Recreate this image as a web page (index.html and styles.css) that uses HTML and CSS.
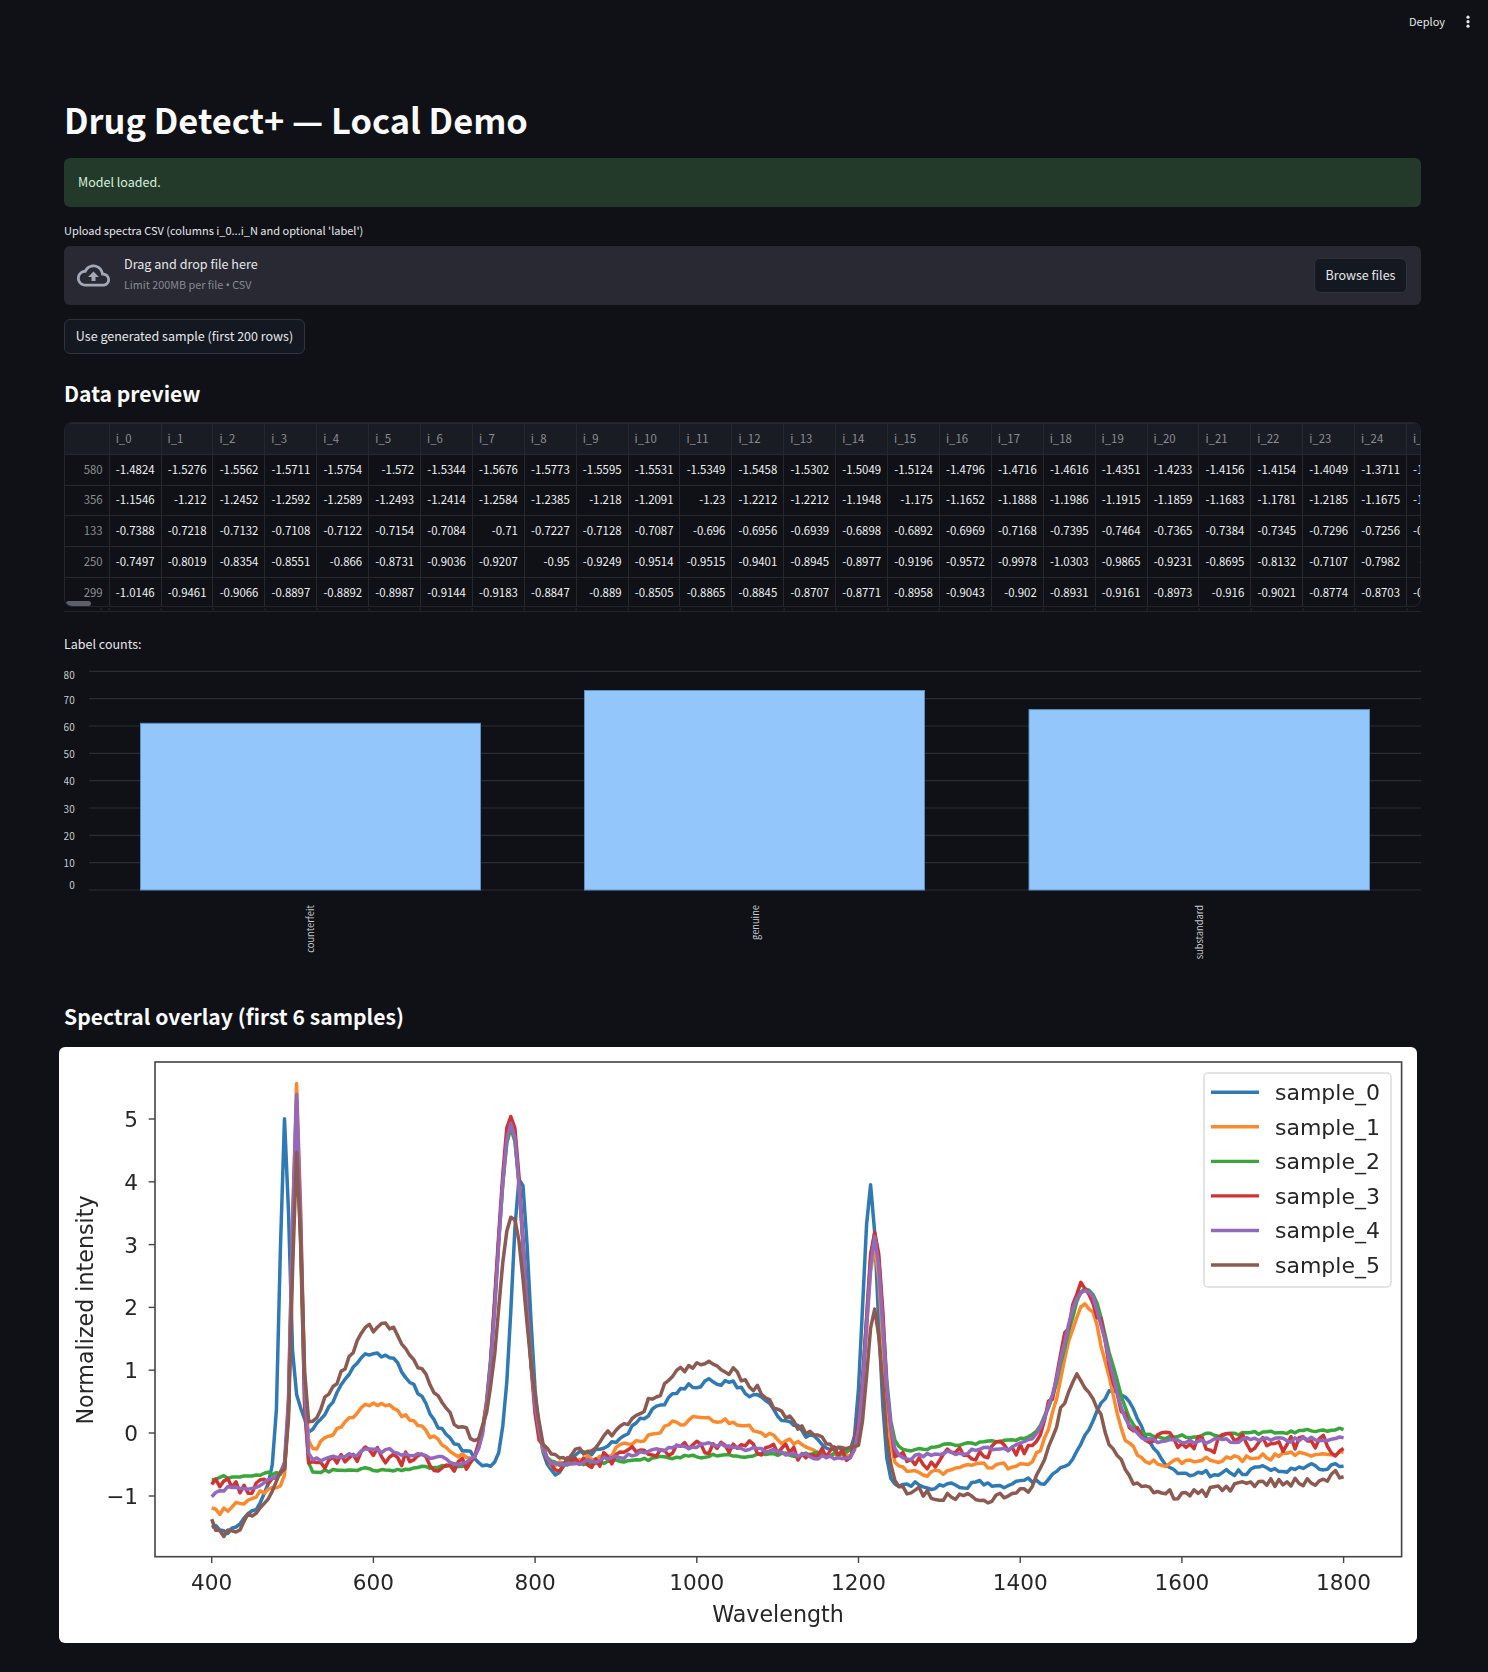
FILE: index.html
```html
<!DOCTYPE html>
<html lang="en">

<head>
    <meta charset="UTF-8">
    <title>Drug Detect+</title>
    <link rel="stylesheet" href="styles.css">
</head>

<body>
    <div class="toolbar">
        <span class="deploy">Deploy</span>
        <svg class="menu-dots" width="6" height="16" viewBox="0 0 6 16">
            <circle cx="3" cy="3.2" r="1.6"></circle>
            <circle cx="3" cy="7.7" r="1.6"></circle>
            <circle cx="3" cy="12.2" r="1.6"></circle>
        </svg>
    </div>

    <main class="main">
        <h1 class="page-title">Drug Detect+ — Local Demo</h1>

        <div class="alert-success">Model loaded.</div>

        <div class="upload-label">Upload spectra CSV (columns i_0...i_N and optional 'label')</div>
        <div class="uploader">
            <svg class="upload-icon" width="33" height="33" viewBox="0 0 24 24">
                <path d="M19.35 10.04C18.67 6.59 15.64 4 12 4 9.11 4 6.6 5.64 5.35 8.04 2.34 8.36 0 10.91 0 14c0 3.31 2.69 6 6 6h13c2.76 0 5-2.24 5-5 0-2.64-2.05-4.78-4.65-4.96zM19 18H6c-2.21 0-4-1.79-4-4 0-2.05 1.53-3.76 3.56-3.97l1.07-.11.5-.95C8.08 7.14 9.94 6 12 6c2.62 0 4.88 1.86 5.39 4.43l.3 1.5 1.53.11c1.56.1 2.78 1.41 2.78 2.96 0 1.65-1.35 3-3 3zM8 13h2.55v3h2.9v-3H16l-4-4z"></path>
            </svg>
            <div class="upload-text">
                <div class="upload-title">Drag and drop file here</div>
                <div class="upload-limit">Limit 200MB per file <span class="limit-dot">•</span> CSV</div>
            </div>
            <button class="btn btn-browse">Browse files</button>
        </div>

        <button class="btn btn-sample">Use generated sample (first 200 rows)</button>

        <h2 class="section-title preview-title">Data preview</h2>

        <div class="table-wrap">
            <table class="data-table">
                <thead>
                    <tr><th></th><th>i_0</th><th>i_1</th><th>i_2</th><th>i_3</th><th>i_4</th><th>i_5</th><th>i_6</th><th>i_7</th><th>i_8</th><th>i_9</th><th>i_10</th><th>i_11</th><th>i_12</th><th>i_13</th><th>i_14</th><th>i_15</th><th>i_16</th><th>i_17</th><th>i_18</th><th>i_19</th><th>i_20</th><th>i_21</th><th>i_22</th><th>i_23</th><th>i_24</th><th>i_25</th></tr>
                </thead>
                <tbody>
                    <tr><th>580</th><td>-1.4824</td><td>-1.5276</td><td>-1.5562</td><td>-1.5711</td><td>-1.5754</td><td>-1.572</td><td>-1.5344</td><td>-1.5676</td><td>-1.5773</td><td>-1.5595</td><td>-1.5531</td><td>-1.5349</td><td>-1.5458</td><td>-1.5302</td><td>-1.5049</td><td>-1.5124</td><td>-1.4796</td><td>-1.4716</td><td>-1.4616</td><td>-1.4351</td><td>-1.4233</td><td>-1.4156</td><td>-1.4154</td><td>-1.4049</td><td>-1.3711</td><td>-1.3566</td></tr>
                    <tr><th>356</th><td>-1.1546</td><td>-1.212</td><td>-1.2452</td><td>-1.2592</td><td>-1.2589</td><td>-1.2493</td><td>-1.2414</td><td>-1.2584</td><td>-1.2385</td><td>-1.218</td><td>-1.2091</td><td>-1.23</td><td>-1.2212</td><td>-1.2212</td><td>-1.1948</td><td>-1.175</td><td>-1.1652</td><td>-1.1888</td><td>-1.1986</td><td>-1.1915</td><td>-1.1859</td><td>-1.1683</td><td>-1.1781</td><td>-1.2185</td><td>-1.1675</td><td>-1.1542</td></tr>
                    <tr><th>133</th><td>-0.7388</td><td>-0.7218</td><td>-0.7132</td><td>-0.7108</td><td>-0.7122</td><td>-0.7154</td><td>-0.7084</td><td>-0.71</td><td>-0.7227</td><td>-0.7128</td><td>-0.7087</td><td>-0.696</td><td>-0.6956</td><td>-0.6939</td><td>-0.6898</td><td>-0.6892</td><td>-0.6969</td><td>-0.7168</td><td>-0.7395</td><td>-0.7464</td><td>-0.7365</td><td>-0.7384</td><td>-0.7345</td><td>-0.7296</td><td>-0.7256</td><td>-0.7198</td></tr>
                    <tr><th>250</th><td>-0.7497</td><td>-0.8019</td><td>-0.8354</td><td>-0.8551</td><td>-0.866</td><td>-0.8731</td><td>-0.9036</td><td>-0.9207</td><td>-0.95</td><td>-0.9249</td><td>-0.9514</td><td>-0.9515</td><td>-0.9401</td><td>-0.8945</td><td>-0.8977</td><td>-0.9196</td><td>-0.9572</td><td>-0.9978</td><td>-1.0303</td><td>-0.9865</td><td>-0.9231</td><td>-0.8695</td><td>-0.8132</td><td>-0.7107</td><td>-0.7982</td><td>-0.849</td></tr>
                    <tr><th>299</th><td>-1.0146</td><td>-0.9461</td><td>-0.9066</td><td>-0.8897</td><td>-0.8892</td><td>-0.8987</td><td>-0.9144</td><td>-0.9183</td><td>-0.8847</td><td>-0.889</td><td>-0.8505</td><td>-0.8865</td><td>-0.8845</td><td>-0.8707</td><td>-0.8771</td><td>-0.8958</td><td>-0.9043</td><td>-0.902</td><td>-0.8931</td><td>-0.9161</td><td>-0.8973</td><td>-0.916</td><td>-0.9021</td><td>-0.8774</td><td>-0.8703</td><td>-0.8612</td></tr>
                </tbody>
            </table>
            <div class="table-scrollbar"></div>
        </div>
        <div class="table-tail"></div>

        <div class="counts-label">Label counts:</div>

        <!-- 柱状图：x、y 相对图表左上角 (64, 660) -->
        <svg class="bar-chart" width="1357" height="310" viewBox="0 0 1357 310">
            <g class="grid-lines">
                <line x1="25" x2="1357" y1="11.3" y2="11.3"></line>
                <line x1="25" x2="1357" y1="38.7" y2="38.7"></line>
                <line x1="25" x2="1357" y1="66" y2="66"></line>
                <line x1="25" x2="1357" y1="93.3" y2="93.3"></line>
                <line x1="25" x2="1357" y1="120.7" y2="120.7"></line>
                <line x1="25" x2="1357" y1="148" y2="148"></line>
                <line x1="25" x2="1357" y1="175.3" y2="175.3"></line>
                <line x1="25" x2="1357" y1="202.7" y2="202.7"></line>
                <line x1="25" x2="1357" y1="230" y2="230"></line>
            </g>
            <g class="bars">
                <rect x="76.5" y="63.3" width="340" height="166.7"></rect>
                <rect x="520.5" y="30.5" width="340" height="199.5"></rect>
                <rect x="965" y="49.6" width="340.5" height="180.4"></rect>
            </g>
            <g class="y-labels">
                <text x="10.7" y="19">80</text>
                <text x="10.7" y="43.5">70</text>
                <text x="10.7" y="70.5">60</text>
                <text x="10.7" y="98">50</text>
                <text x="10.7" y="125">40</text>
                <text x="10.7" y="152.5">30</text>
                <text x="10.7" y="179.5">20</text>
                <text x="10.7" y="206.5">10</text>
                <text x="10.7" y="229">0</text>
            </g>
            <g class="x-labels">
                <text transform="translate(250 245) rotate(-90)">counterfeit</text>
                <text transform="translate(694.5 245) rotate(-90)">genuine</text>
                <text transform="translate(1138.5 245) rotate(-90)">substandard</text>
            </g>
        </svg>

        <h2 class="section-title overlay-title">Spectral overlay (first 6 samples)</h2>

        <div class="plot-card">
            <svg class="spectra-plot" width="1358" height="596" viewBox="0 0 1358 596">
                <g id="spectra"></g>
                <rect class="plot-frame" x="96" y="15" width="1246.6" height="494.7"></rect>
                <g class="plot-ticks">
                    <line x1="152.7" x2="152.7" y1="509.7" y2="516"></line>
                    <line x1="314.4" x2="314.4" y1="509.7" y2="516"></line>
                    <line x1="476.1" x2="476.1" y1="509.7" y2="516"></line>
                    <line x1="637.8" x2="637.8" y1="509.7" y2="516"></line>
                    <line x1="799.5" x2="799.5" y1="509.7" y2="516"></line>
                    <line x1="961.2" x2="961.2" y1="509.7" y2="516"></line>
                    <line x1="1122.9" x2="1122.9" y1="509.7" y2="516"></line>
                    <line x1="1284.6" x2="1284.6" y1="509.7" y2="516"></line>
                    <line x1="89.7" x2="96" y1="449" y2="449"></line>
                    <line x1="89.7" x2="96" y1="386" y2="386"></line>
                    <line x1="89.7" x2="96" y1="323.2" y2="323.2"></line>
                    <line x1="89.7" x2="96" y1="260.4" y2="260.4"></line>
                    <line x1="89.7" x2="96" y1="197.6" y2="197.6"></line>
                    <line x1="89.7" x2="96" y1="134.8" y2="134.8"></line>
                    <line x1="89.7" x2="96" y1="72" y2="72"></line>
                </g>
                <g class="plot-text x-ticks">
                    <text x="152.7" y="543">400</text>
                    <text x="314.4" y="543">600</text>
                    <text x="476.1" y="543">800</text>
                    <text x="637.8" y="543">1000</text>
                    <text x="799.5" y="543">1200</text>
                    <text x="961.2" y="543">1400</text>
                    <text x="1122.9" y="543">1600</text>
                    <text x="1284.6" y="543">1800</text>
                    <text class="axis-title" x="719" y="575">Wavelength</text>
                </g>
                <g class="plot-text y-ticks">
                    <text x="79" y="457">−1</text>
                    <text x="79" y="394">0</text>
                    <text x="79" y="331">1</text>
                    <text x="79" y="268">2</text>
                    <text x="79" y="205.6">3</text>
                    <text x="79" y="142.8">4</text>
                    <text x="79" y="80">5</text>
                </g>
                <text class="plot-text axis-title y-title" transform="translate(33.5 263) rotate(-90)">Normalized intensity</text>
                <rect class="legend-box" x="1145" y="26" width="187" height="214" rx="4"></rect>
                <g class="legend-lines">
                    <line class="s0" x1="1152" x2="1200" y1="45.3" y2="45.3"></line>
                    <line class="s1" x1="1152" x2="1200" y1="79.8" y2="79.8"></line>
                    <line class="s2" x1="1152" x2="1200" y1="114.4" y2="114.4"></line>
                    <line class="s3" x1="1152" x2="1200" y1="148.9" y2="148.9"></line>
                    <line class="s4" x1="1152" x2="1200" y1="183.5" y2="183.5"></line>
                    <line class="s5" x1="1152" x2="1200" y1="218" y2="218"></line>
                </g>
                <g class="plot-text legend-text">
                    <text x="1216" y="53">sample_0</text>
                    <text x="1216" y="87.5">sample_1</text>
                    <text x="1216" y="122">sample_2</text>
                    <text x="1216" y="156.5">sample_3</text>
                    <text x="1216" y="191">sample_4</text>
                    <text x="1216" y="225.5">sample_5</text>
                </g>
            </svg>
        </div>
    </main>

    <script src="spectra.js"></script>
</body>

</html>
```

FILE: styles.css
```css
/* 页面基础样式 */
* {
    box-sizing: border-box;
}

body {
    margin: 0;
    background: #0f1116;
    color: #fafafa;
    font-family: "Noto Sans CJK SC", "Noto Sans", sans-serif;
    font-size: 13px;
}

/* 顶部工具栏 */
.toolbar {
    height: 44px;
    display: flex;
    justify-content: flex-end;
    align-items: center;
    gap: 20px;
    padding-right: 17px;
}

.deploy {
    padding-bottom: 2px;
    font-size: 11px;
    color: #e6e7ea;
}

.menu-dots {
    fill: #e6e7ea;
}

/* 主内容区 */
.main {
    padding: 0 67px 29px 64px;
}

.page-title {
    margin: 50px 0 14px;
    font-size: 34.4px;
    line-height: 50px;
    font-weight: 700;
    color: #fafafa;
}

.alert-success {
    height: 49px;
    display: flex;
    align-items: center;
    padding: 0 14px 3px;
    border-radius: 6px;
    background: #233a2a;
    color: #d6f0dc;
    font-size: 12.5px;
}

.upload-label {
    margin-top: 15px;
    line-height: 16px;
    font-size: 11px;
    color: #e6e7ea;
}

/* 上传框 */
.uploader {
    height: 59px;
    margin-top: 8px;
    display: flex;
    align-items: center;
    padding: 0 14px 0 13px;
    border-radius: 6px;
    background: #282932;
}

.upload-icon {
    fill: #a3a8b8;
    flex: none;
}

.upload-text {
    flex: 1;
    margin-left: 14px;
    padding-bottom: 2px;
}

.upload-title {
    line-height: 20px;
    font-size: 12.6px;
    color: #e6e7ea;
}

.upload-limit {
    line-height: 20px;
    font-size: 10.8px;
    color: #868a93;
}

/* CJK 字体的圆点太宽，这里换一个窄的 */
.limit-dot {
    font-family: "Noto Sans", sans-serif;
}

.btn {
    display: block;
    height: 35px;
    padding: 0 0 2px;
    border: 1px solid #30333c;
    border-radius: 6px;
    background: #141821;
    color: #e6e7ea;
    font-family: inherit;
    font-size: 12.5px;
}

.btn-browse {
    width: 93px;
}

.btn-sample {
    width: 241px;
    margin-top: 14px;
}

.section-title {
    margin: 0;
    font-weight: 700;
    color: #fafafa;
    font-size: 21.1px;
}

.preview-title {
    margin-top: 23px;
    line-height: 32px;
}

/* 数据表格 */
.table-wrap {
    position: relative;
    height: 185px;
    margin-top: 13px;
    overflow: hidden;
    border: 1px solid #22252c;
    border-radius: 8px;
}

.data-table {
    table-layout: fixed;
    width: 1394px;
    margin-left: -1px;
    border-collapse: collapse;
    font-size: 11.4px;
}

.data-table th,
.data-table td {
    width: 51.9px;
    height: 30.8px;
    padding: 0 6px 2px;
    border: 1px solid #262830;
    font-weight: 400;
    white-space: nowrap;
    overflow: hidden;
}

.data-table th:first-child {
    width: 44.7px;
}

.data-table thead th {
    background: #1a1c24;
    color: #8a8d93;
    text-align: left;
}

.data-table tbody th {
    color: #8a8d93;
    text-align: right;
}

.data-table td {
    color: #f0f1f3;
    text-align: right;
}

.table-scrollbar {
    position: absolute;
    left: 1px;
    bottom: 0;
    width: 25px;
    height: 5px;
    border-radius: 3px;
    background: #5d6066;
}

/* 表格下方露出的一截 */
.table-tail {
    height: 4px;
    margin-top: 1px;
    border-bottom: 1px solid #22252c;
    background: repeating-linear-gradient(90deg, #262830 0 1px, transparent 1px 51.9px) 44.7px 0;
}

.counts-label {
    margin-top: 23px;
    line-height: 18px;
    font-size: 12.5px;
    color: #e6e7ea;
}

/* 柱状图 */
.bar-chart {
    display: block;
    margin-top: 7px;
}

.grid-lines line {
    stroke: #2a2c33;
    stroke-width: 1.2;
}

.bars rect {
    fill: #93c6fa;
    stroke: #5f8fc0;
    stroke-width: 1;
}

.y-labels text,
.x-labels text {
    fill: #c9cacd;
    font-family: "Noto Sans CJK SC", sans-serif;
}

.y-labels text {
    font-size: 10px;
    text-anchor: end;
}

.x-labels text {
    font-size: 9.3px;
    text-anchor: end;
}

.overlay-title {
    margin-top: 29px;
    line-height: 34px;
}

/* 光谱图卡片 */
.plot-card {
    width: 1358px;
    height: 596px;
    margin: 14px 0 0 -5px;
    border-radius: 6px;
    background: #fff;
    overflow: hidden;
}

/* 参考图是放大过的位图，线条略糊 */
.spectra-plot {
    display: block;
    filter: blur(0.5px);
}

.plot-frame {
    fill: none;
    stroke: #444;
    stroke-width: 1.6;
}

.plot-ticks line {
    stroke: #444;
    stroke-width: 1.4;
}

.plot-text {
    font-family: "DejaVu Sans", sans-serif;
    font-size: 21.6px;
    fill: #262626;
}

.axis-title {
    font-size: 22.2px;
}

.legend-text {
    font-size: 22px;
}

.x-ticks text {
    text-anchor: middle;
}

.y-ticks text {
    text-anchor: end;
}

.y-title {
    text-anchor: middle;
}

.legend-box {
    fill: #fff;
    fill-opacity: 0.8;
    stroke: #dcdcdc;
    stroke-width: 1.5;
}

.legend-lines line {
    stroke-width: 3.4;
}

.spectrum {
    fill: none;
    stroke-width: 3.5;
    stroke-linejoin: round;
}

.s0 { stroke: #2f7ab5; }
.s1 { stroke: #fb8a2e; }
.s2 { stroke: #3aa53a; }
.s3 { stroke: #cf3434; }
.s4 { stroke: #9369bd; }
.s5 { stroke: #8c5a50; }
```

FILE: spectra.js
```js
// 光谱叠加图：基线 + 高斯峰 + 噪声
// base: 基线折线 [波长, 值]；hump: 宽峰；peaks: 窄峰 [中心, 高度, 宽度]
var samples = [
    {
        noise: 0.06,
        base: [[400, -1.45], [415, -1.6], [440, -1.4], [460, -1.1], [474, -0.65], [510, -0.6], [730, -0.55], [760, -0.6], [800, -0.55], [830, -0.7], [850, -0.5], [1190, -0.45], [1240, -0.8], [1300, -0.85], [1400, -0.8], [1460, -0.75], [1580, -0.72], [1800, -0.5]],
        hump: [[605, 1.85, 54], [1020, 1.3, 78]],
        peaks: [[490, 5.35, 5.5], [503, 1.0, 8], [782, 4.65, 11], [1215, 4.45, 9], [1517, 1.4, 32]]
    },
    {
        noise: 0.06,
        base: [[400, -1.15], [410, -1.25], [440, -1.1], [470, -0.9], [495, -0.7], [515, -0.6], [730, -0.5], [820, -0.55], [1190, -0.4], [1240, -0.62], [1300, -0.65], [1350, -0.55], [1400, -0.55], [1440, -0.5], [1540, -0.45], [1580, -0.5], [1800, -0.28]],
        hump: [[605, 1.0, 54], [1010, 0.7, 78]],
        peaks: [[505, 6.1, 5.5], [770, 5.5, 16], [1220, 3.45, 10], [1480, 2.55, 26]]
    },
    {
        noise: 0.03,
        base: [[400, -0.72], [480, -0.65], [515, -0.62], [730, -0.52], [800, -0.52], [1000, -0.42], [1190, -0.33], [1250, -0.28], [1350, -0.15], [1450, -0.1], [1560, -0.07], [1800, 0.05]],
        hump: [[1010, 0.05, 80]],
        peaks: [[505, 5.5, 5.5], [770, 5.4, 16.5], [1220, 3.5, 10], [1482, 2.4, 27]]
    },
    {
        noise: 0.14,
        base: [[400, -0.75], [415, -0.9], [440, -0.95], [470, -0.8], [495, -0.8], [515, -0.72], [530, -0.65], [730, -0.55], [800, -0.5], [1190, -0.42], [1270, -0.43], [1350, -0.32], [1450, -0.25], [1560, -0.13], [1800, -0.19]],
        hump: [[605, 0.25, 54], [1010, 0.25, 80]],
        peaks: [[505, 5.9, 5.5], [770, 5.6, 16], [1220, 3.65, 10], [1480, 2.55, 27]]
    },
    {
        noise: 0.04,
        base: [[400, -1.0], [410, -0.88], [450, -0.85], [490, -0.65], [515, -0.55], [730, -0.52], [800, -0.5], [1190, -0.42], [1250, -0.4], [1350, -0.27], [1450, -0.2], [1560, -0.15], [1800, -0.08]],
        hump: [[605, 0.25, 60], [1010, 0.25, 80]],
        peaks: [[505, 5.95, 5.5], [770, 5.45, 16], [1220, 3.5, 10], [1480, 2.5, 27]]
    },
    {
        noise: 0.09,
        base: [[400, -1.35], [408, -1.55], [420, -1.6], [440, -1.4], [460, -1.2], [480, -0.72], [495, -0.6], [515, -0.55], [730, -0.45], [800, -0.55], [1190, -0.48], [1240, -0.9], [1300, -1.0], [1350, -1.1], [1400, -1.05], [1440, -0.95], [1520, -0.8], [1560, -0.85], [1590, -1.0], [1650, -0.9], [1800, -0.68]],
        hump: [[610, 2.2, 58], [1015, 1.6, 80]],
        peaks: [[505, 4.75, 5.5], [772, 3.9, 17], [1220, 2.6, 9.5], [1472, 1.75, 28]]
    }
];

function lerp(points, x) {
    for (var i = 1; i < points.length; i++) {
        if (x <= points[i][0]) {
            var a = points[i - 1], b = points[i];
            return a[1] + (b[1] - a[1]) * (x - a[0]) / (b[0] - a[0]);
        }
    }
    return points[points.length - 1][1];
}

function gauss(x, c, s) {
    return Math.exp(-(x - c) * (x - c) / (2 * s * s));
}

// 第一个宽峰在 500 附近才开始
function gate(x) {
    var t = Math.min(1, Math.max(0, (x - 498) / 14));
    return t * t * (3 - 2 * t);
}

function buildPath(sample, seed) {
    var rnd = seed * 7919 + 17, prev = 0, d = '';
    for (var x = 400; x <= 1800; x += 5) {
        rnd = (rnd * 16807) % 2147483647;
        var n = (rnd / 2147483647) * 2 - 1;
        prev = n * 0.75 + prev * 0.35;

        var v = lerp(sample.base, x) + prev * sample.noise * 1.3;
        sample.hump.forEach(function (h) {
            v += h[1] * gauss(x, h[0], h[2]) * gate(x);
        });
        sample.peaks.forEach(function (p) {
            v += p[1] * gauss(x, p[0], p[2]);
        });

        var px = 152.7 + (x - 400) * 0.8085;
        var py = 386 - 62.8 * v;
        d += (d ? 'L' : 'M') + px.toFixed(1) + ' ' + py.toFixed(1);
    }
    return d;
}

var group = document.querySelector('#spectra');
samples.forEach(function (sample, i) {
    var path = document.createElementNS('http://www.w3.org/2000/svg', 'path');
    path.setAttribute('class', 'spectrum s' + i);
    path.setAttribute('d', buildPath(sample, i + 1));
    group.appendChild(path);
});
```
